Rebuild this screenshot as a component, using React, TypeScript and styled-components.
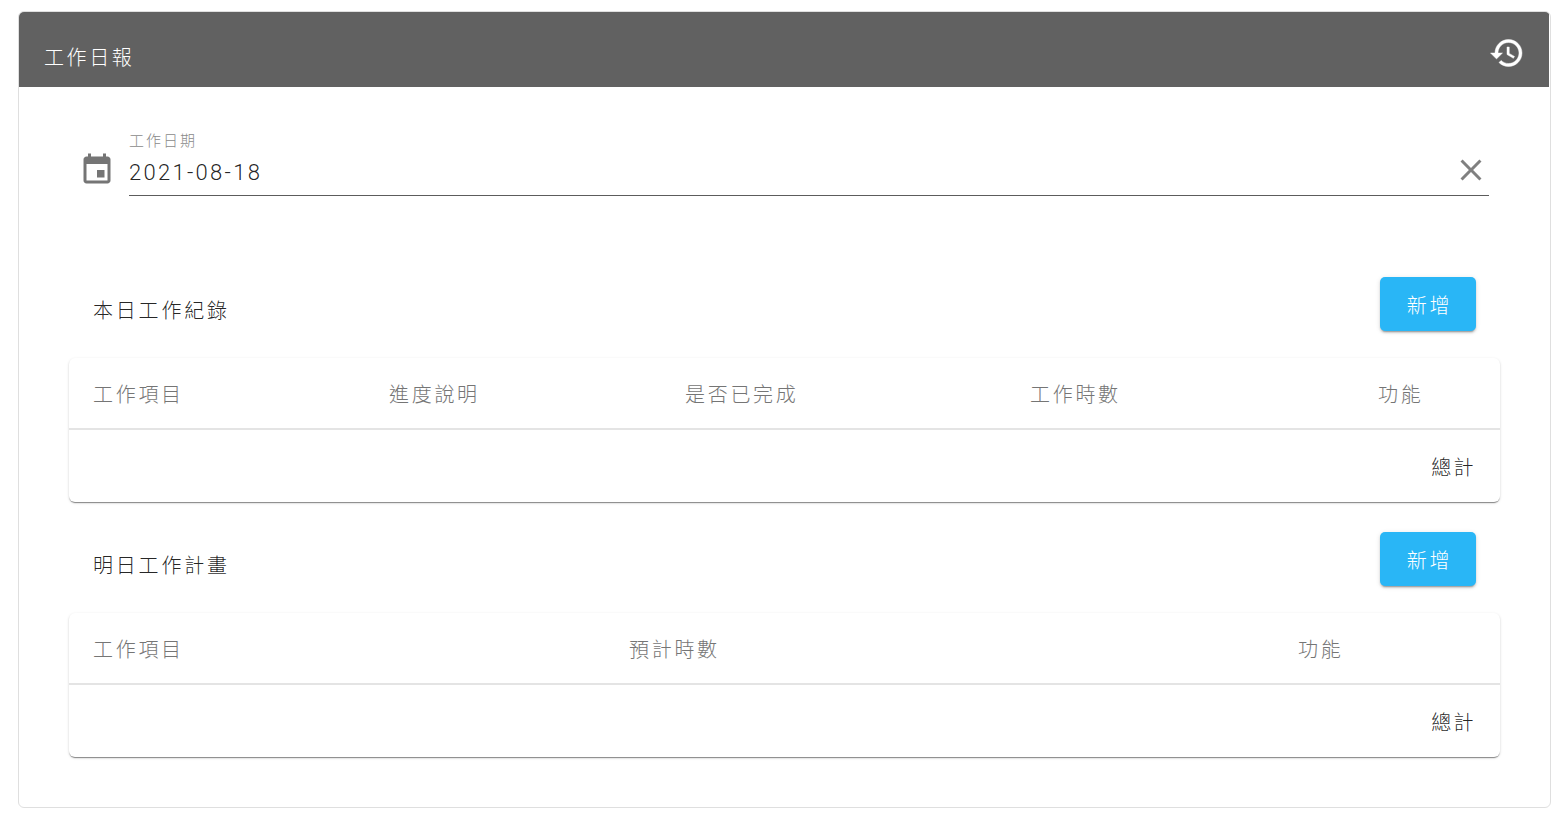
import * as React from 'react'
import styled, { createGlobalStyle } from 'styled-components'

const GlobalStyle = createGlobalStyle`
  html, body {
    margin: 0;
    background: #fff;
  }
  body {
    font-family: Roboto, "Noto Sans CJK TC", sans-serif;
    font-weight: 300;
    color: rgba(0, 0, 0, 0.87);
  }
`

const Page = styled.div`
  padding: 11px 17px 18px 18px;
`
const Card = styled.div`
  border: 1px solid #dfdfdf;
  border-radius: 6px;
  overflow: hidden;
  background: #fff;
`
const Header = styled.header`
  height: 75px;
  margin-right: 1px;
  background: #616161;
  color: #fff;
  display: flex;
  align-items: center;
  justify-content: space-between;
  padding: 0 24px 0 25px;
  box-sizing: border-box;
`
const HeaderTitle = styled.h1`
  margin: 17px 0 0;
  font-size: 20px;
  font-weight: 300;
  letter-spacing: 2.6px;
  line-height: 30px;
`
const HistoryIcon = styled.svg`
  width: 36px;
  height: 36px;
  fill: #fff;
  stroke: #fff;
  stroke-width: 0.3;
  margin-top: 7px;
`
const Body = styled.div`
  padding: 0 50px 50px;
`
const DateRow = styled.div`
  display: flex;
  align-items: flex-end;
  padding: 43px 11px 0 10px;
`
const DateIcon = styled.svg`
  width: 36px;
  height: 36px;
  fill: #757575;
  flex: none;
  margin: 0 14px 8px 0;
`
const DateField = styled.div`
  flex: 1;
  border-bottom: 1px solid #5c5c5c;
  height: 66px;
  box-sizing: border-box;
  display: flex;
  flex-direction: column;
  position: relative;
`
const DateLabel = styled.label`
  font-size: 15px;
  letter-spacing: 2px;
  line-height: 22px;
  color: #8a8a8a;
`
const DateValue = styled.div`
  font-size: 22px;
  letter-spacing: 2.3px;
  line-height: 40px;
  margin-top: 1px;
`
const ClearIcon = styled.svg`
  position: absolute;
  right: 0;
  top: 22px;
  width: 36px;
  height: 36px;
  fill: #808080;
`
const Section = styled.section<{ $first?: boolean }>`
  margin-top: ${p => p.$first ? '81px' : '30px'};
`
const SectionHead = styled.div`
  display: flex;
  align-items: flex-end;
  justify-content: space-between;
  padding: 0 24px;
  margin-bottom: 27px;
`
const SectionTitle = styled.h2`
  margin: 0 0 5px;
  font-size: 20px;
  font-weight: 300;
  letter-spacing: 2.8px;
  line-height: 30px;
`
const AddButton = styled.button`
  width: 96px;
  height: 54px;
  padding: 0 0 0 3px;
  border: 0;
  border-radius: 5px;
  background: #29b6f6;
  color: #fff;
  font: inherit;
  font-size: 20px;
  font-weight: 300;
  letter-spacing: 2.8px;
  box-shadow: 0 3px 1px -2px rgba(0,0,0,.2), 0 2px 2px 0 rgba(0,0,0,.14), 0 1px 5px 0 rgba(0,0,0,.12);
`
const TableCard = styled.div`
  border-radius: 6px;
  box-shadow: 0 2px 1px -1px rgba(0,0,0,.3), 0 1px 1px 0 rgba(0,0,0,.16), 0 1px 3px 0 rgba(0,0,0,.14);
  background: #fff;
`
const HeadRow = styled.div<{ $columns: string }>`
  display: grid;
  grid-template-columns: ${p => p.$columns};
  height: 72px;
  align-items: center;
  border-bottom: 2px solid #e4e4e4;
  box-sizing: border-box;
`
const HeadCell = styled.div`
  padding-left: 24px;
  font-size: 20px;
  letter-spacing: 2.7px;
  color: #757575;
`
const FootRow = styled.div`
  height: 72px;
  display: flex;
  align-items: center;
  justify-content: flex-end;
  padding: 0 24px 0 0;
  box-sizing: border-box;
  font-size: 20px;
  letter-spacing: 2.4px;
`

const TodayColumns = ['工作項目', '進度說明', '是否已完成', '工作時數', '功能']
const TomorrowColumns = ['工作項目', '預計時數', '功能']

const DailyTable = ({ columns, template }: { columns: string[], template: string }) => (
  <TableCard>
    <HeadRow $columns={template}>
      {columns.map(c => <HeadCell key={c}>{c}</HeadCell>)}
    </HeadRow>
    <FootRow>總計</FootRow>
  </TableCard>
)

export default function App () {
  return (
    <Page>
      <GlobalStyle />
      <Card>
        <Header>
          <HeaderTitle>工作日報</HeaderTitle>
          <HistoryIcon viewBox='0 0 24 24'>
            <path d='M13 3c-4.97 0-9 4.03-9 9H1l3.89 3.89.07.14L9 12H6c0-3.87 3.13-7 7-7s7 3.13 7 7-3.13 7-7 7c-1.93 0-3.68-.79-4.94-2.06l-1.42 1.42C8.27 19.99 10.51 21 13 21c4.97 0 9-4.03 9-9s-4.03-9-9-9zm-1 5v5l4.28 2.54.72-1.21-3.5-2.08V8H12z' />
          </HistoryIcon>
        </Header>
        <Body>
          <DateRow>
            <DateIcon viewBox='0 0 24 24'>
              <path d='M17 12h-5v5h5v-5zM16 1v2H8V1H6v2H5c-1.11 0-1.99.9-1.99 2L3 19c0 1.1.89 2 2 2h14c1.1 0 2-.9 2-2V5c0-1.1-.9-2-2-2h-1V1h-2zm3 18H5V8h14v11z' />
            </DateIcon>
            <DateField>
              <DateLabel>工作日期</DateLabel>
              <DateValue>2021-08-18</DateValue>
              <ClearIcon viewBox='0 0 24 24'>
                <path d='M19 6.41 17.59 5 12 10.59 6.41 5 5 6.41 10.59 12 5 17.59 6.41 19 12 13.41 17.59 19 19 17.59 13.41 12z' />
              </ClearIcon>
            </DateField>
          </DateRow>
          <Section $first>
            <SectionHead>
              <SectionTitle>本日工作紀錄</SectionTitle>
              <AddButton>新增</AddButton>
            </SectionHead>
            <DailyTable columns={TodayColumns} template='296px 296px 345px 348px 1fr' />
          </Section>
          <Section>
            <SectionHead>
              <SectionTitle>明日工作計畫</SectionTitle>
              <AddButton>新增</AddButton>
            </SectionHead>
            <DailyTable columns={TomorrowColumns} template='536px 669px 1fr' />
          </Section>
        </Body>
      </Card>
    </Page>
  )
}
